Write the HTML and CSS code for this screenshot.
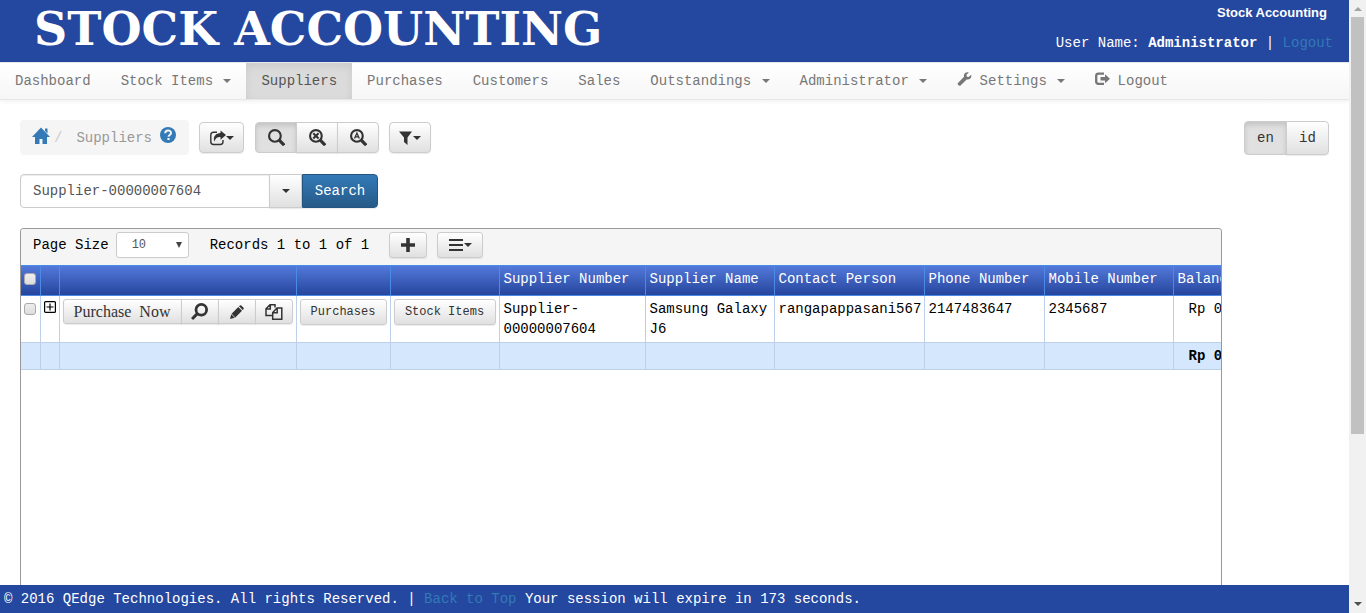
FILE: index.html
```html
<!DOCTYPE html>
<html lang="en">
<head>
<meta charset="utf-8">
<title>Stock Accounting - Suppliers</title>
<link rel="stylesheet" href="styles.css">
</head>
<body>
<svg class="defs" aria-hidden="true">
  <symbol id="i-home" viewBox="0 0 18 18"><path d="M9 0.5 18 10h-3v7h-4.500v-5h-3v5H3v-7H0L9 .5zM13 1.500h2.500v5L13 4z"/></symbol>
  <symbol id="i-help" viewBox="0 0 16 16"><circle cx="8" cy="8" r="8"/><path d="M5.200 6.200C5.200 2.500 11 2.600 11 5.900 11 8 8.600 7.900 8.500 9.800" fill="none" stroke="#f5f5f5" stroke-width="2"/><path d="M7.400 11h2.200v2H7.400z" fill="#f5f5f5"/></symbol>
  <symbol id="i-share" viewBox="0 0 16 15"><path d="M7 1.800H3.500Q.8 1.800.8 4.500v6.800Q.8 14 3.500 14h6.800q2.700 0 2.700-2.700V9.500" fill="none" stroke="currentColor" stroke-width="1.400"/><path d="M10.500 0 16 4.500l-5.500 4.800V6.500C7.500 6.300 5.500 7.500 4.300 11 2.800 6 6 2.500 10.500 2.500z"/></symbol>
  <symbol id="i-search" viewBox="0 0 16 16"><circle cx="6.500" cy="6.500" r="5.500" fill="none" stroke="currentColor" stroke-width="2"/><path d="m10.300 10.300 4.900 4.900" stroke="currentColor" stroke-width="3"/></symbol>
  <symbol id="i-lens" viewBox="0 0 16 16"><circle cx="9.700" cy="6.300" r="5" fill="none" stroke="currentColor" stroke-width="2.600"/><path d="M6 10 1 15" stroke="currentColor" stroke-width="2.800"/></symbol>
  <symbol id="i-x" viewBox="0 0 16 16"><path d="m4 4 5 5M9 4 4 9" stroke="currentColor" stroke-width="2"/></symbol>
  <symbol id="i-a" viewBox="0 0 16 16"><path d="m4.200 9 2.300-5.200L8.800 9M5 7.500h3" stroke="currentColor" stroke-width="1.200" fill="none"/></symbol>
  <symbol id="i-filter" viewBox="0 0 14 14"><path d="M0 0.500h13L8.500 6.500V14L5 11V6.500z"/></symbol>
  <symbol id="i-wrench" viewBox="0 0 14 14"><path d="M13.600 2.700 11.200 5 9.300 4.700 9 2.800 11.300.4C8.500-.6 5.700 1.500 6.500 4.700L.5 10.900c-1.200 1.400 1.100 3.700 2.500 2.500l6.200-6c3 .8 5.300-1.900 4.400-4.700z"/></symbol>
  <symbol id="i-logout" viewBox="0 0 15 14"><path d="M9 1.600H3.500Q1.200 1.600 1.200 3.900v5.700q0 2.300 2.300 2.300H9" fill="none" stroke="currentColor" stroke-width="2.300"/><path d="M10 2.300 15 6.700 10 11.200V8.500H5.500V5H10z"/></symbol>
  <symbol id="i-plus" viewBox="0 0 14 14"><path d="M5.200 0h3.600v5.200H14v3.600H8.800V14H5.200V8.800H0V5.200h5.200z"/></symbol>
  <symbol id="i-menu" viewBox="0 0 14 12"><path d="M0 0h14v2H0zM0 5h14v2H0zM0 10h14v2H0z"/></symbol>
  <symbol id="i-pencil" viewBox="0 0 14 14"><path d="m0 14 1.200-4.800 3.600 3.600zM1.600 8.700 8.300 2 12 5.700 5.300 12.400zM9 1.300l.8-.8q.7-.7 1.500 0l2.200 2.200q.7.800 0 1.500l-.8.800z"/></symbol>
  <symbol id="i-copy" viewBox="0 0 18 16"><path d="M10 3.500V.8H5L1 4.800V11.500h6M5.300.8V5H1M12 4h4.800v11.200H7.700V8.500zM12.200 4v4.700H7.700" fill="none" stroke="currentColor" stroke-width="1.500"/></symbol>
  <symbol id="i-expand" viewBox="0 0 12 12"><rect x=".6" y=".6" width="10.800" height="10.800" rx="1" fill="#fff" stroke="#000" stroke-width="1.200"/><path d="M2.500 6h7M6 2.500v7" stroke="#000" stroke-width="1.200"/></symbol>
</svg>
<div class="page">
  <header class="banner">
    <h1 class="logo">STOCK ACCOUNTING</h1>
    <div class="account">
      <strong class="company">Stock Accounting</strong>
      <div>User Name: <strong>Administrator</strong> | <a href="#">Logout</a></div>
    </div>
  </header>
  <nav class="nav">
    <a href="#">Dashboard</a>
    <a href="#">Stock Items <i class="caret"></i></a>
    <a href="#" class="active">Suppliers</a>
    <a href="#">Purchases</a>
    <a href="#">Customers</a>
    <a href="#">Sales</a>
    <a href="#">Outstandings <i class="caret"></i></a>
    <a href="#">Administrator <i class="caret"></i></a>
    <a href="#"><svg class="nav-icon"><use href="#i-wrench"/></svg> Settings <i class="caret"></i></a>
    <a href="#"><svg class="nav-icon"><use href="#i-logout"/></svg> Logout</a>
  </nav>
  <main class="content">
    <div class="tools">
      <div class="crumbs">
        <a href="#" aria-label="Home"><svg class="icon-home"><use href="#i-home"/></svg></a>
        <span class="slash">/</span>
        <span class="current">Suppliers</span>
        <a href="#" aria-label="Help"><svg class="icon-help"><use href="#i-help"/></svg></a>
      </div>
      <button class="btn export" aria-label="Export"><svg class="icon-help"><use href="#i-share"/></svg><i class="caret"></i></button>
      <div class="group modes">
        <button class="btn on" aria-label="Search"><svg class="icon"><use href="#i-search"/></svg></button>
        <button class="btn" aria-label="Clear search"><svg class="icon"><use href="#i-search"/><use href="#i-x"/></svg></button>
        <button class="btn" aria-label="Show all"><svg class="icon"><use href="#i-search"/><use href="#i-a"/></svg></button>
      </div>
      <button class="btn filter" aria-label="Filter"><svg class="icon-sm"><use href="#i-filter"/></svg><i class="caret"></i></button>
      <div class="group lang">
        <button class="btn on">en</button>
        <button class="btn">id</button>
      </div>
    </div>
    <form class="search">
      <input type="text" aria-label="Search text" value="Supplier-00000007604">
      <button type="button" class="btn drop" aria-label="Search options"><i class="caret"></i></button>
      <button type="button" class="btn primary">Search</button>
    </form>
    <section class="panel">
      <div class="panel-bar">
        <label for="size">Page Size</label>
        <div class="select"><select id="size"><option>10</option></select></div>
        <span class="records">Records 1 to 1 of 1</span>
        <button class="btn add" aria-label="Add"><svg class="icon-sm"><use href="#i-plus"/></svg></button>
        <button class="btn more" aria-label="More"><svg class="icon-menu"><use href="#i-menu"/></svg><i class="caret"></i></button>
      </div>
      <table>
        <colgroup><col class="c-check"><col class="c-expand"><col class="c-actions"><col class="c-purch"><col class="c-stock"><col class="c-number"><col class="c-name"><col class="c-contact"><col class="c-phone"><col class="c-mobile"><col class="c-balance"></colgroup>
        <thead>
          <tr><th><input type="checkbox" aria-label="Select all"></th><th></th><th></th><th></th><th></th><th>Supplier Number</th><th>Supplier Name</th><th>Contact Person</th><th>Phone Number</th><th>Mobile Number</th><th>Balance</th></tr>
        </thead>
        <tbody>
          <tr>
            <td><input type="checkbox" aria-label="Select row"></td>
            <td><svg class="expand"><use href="#i-expand"/></svg></td>
            <td><div class="group row-actions"><button class="btn buy">Purchase&nbsp; Now</button><button class="btn" aria-label="View"><svg class="icon"><use href="#i-lens"/></svg></button><button class="btn" aria-label="Edit"><svg class="icon-sm"><use href="#i-pencil"/></svg></button><button class="btn" aria-label="Copy"><svg class="icon-copy"><use href="#i-copy"/></svg></button></div></td>
            <td><button class="btn small">Purchases</button></td>
            <td><button class="btn small">Stock Items</button></td>
            <td class="text">Supplier-<br>00000007604</td>
            <td class="text">Samsung Galaxy J6</td>
            <td class="text">rangapappasani567</td>
            <td class="text">2147483647</td>
            <td class="text">2345687</td>
            <td class="money">Rp 0</td>
          </tr>
        </tbody>
        <tfoot>
          <tr><td></td><td></td><td></td><td></td><td></td><td></td><td></td><td></td><td></td><td></td><td class="money">Rp 0</td></tr>
        </tfoot>
      </table>
    </section>
  </main>
  <footer class="footer">© 2016 QEdge Technologies. All rights Reserved. | <a href="#">Back to Top</a> Your session will expire in 173 seconds.</footer>
</div>
<div class="scrollbar" aria-hidden="true"><i class="up"></i><div class="track"><div class="thumb"></div></div><i class="down"></i></div>
</body>
</html>
```
FILE: styles.css
```css
* { box-sizing: border-box; }
body {
  margin: 0;
  display: flex;
  height: 100vh;
  overflow: hidden;
  background: #fff;
  color: #000;
  font: 14px/20px "Liberation Mono", monospace;
}
a { color: #337ab7; text-decoration: none; }
svg { fill: currentColor; flex: none; }
.defs { display: none; }
.page { flex: 1; min-width: 0; display: flex; flex-direction: column; }

.banner {
  display: flex;
  justify-content: space-between;
  height: 62px;
  flex: none;
  padding: 0 16px 0 34px;
  background: #2447a0;
  color: #fff;
}
.logo { margin: 0; font: bold 46px/58px "DejaVu Serif", serif; white-space: nowrap; }
.account { display: flex; flex-direction: column; gap: 10px; padding-top: 3px; text-align: right; }
.company { padding-right: 6px; font: bold 13px/20px "Liberation Sans", sans-serif; }

.nav {
  display: flex;
  flex: none;
  height: 38px;
  border: solid #e7e7e7;
  border-width: 1px 0;
  background: linear-gradient(#fff, #f6f6f6);
  box-shadow: 0 1px 5px rgba(0, 0, 0, .08);
}
.nav a { padding: 8px 15px; color: #777; white-space: pre; }
.nav .active { background: #dbdbdb; color: #555; box-shadow: inset 0 3px 9px rgba(0, 0, 0, .08); }
.nav-icon { width: 15px; height: 14px; margin-right: -1px; vertical-align: -1px; }
.caret {
  display: inline-block;
  margin-left: 2px;
  border: solid transparent;
  border-width: 4px 4px 0;
  border-top-color: currentColor;
  vertical-align: middle;
}

.content { flex: 1; min-height: 0; display: flex; flex-direction: column; gap: 19px; padding: 20px 20px 0; overflow: hidden; }
.tools { display: flex; align-items: center; height: 35px; flex: none; }
.crumbs { display: flex; width: 169px; height: 35px; padding: 7px 12px; border-radius: 4px; background: #f5f5f5; }
.icon-home { width: 18px; height: 18px; }
.slash { margin: 1px 0 0 4px; color: #ccc; }
.current { margin: 1px 8px 0 14px; color: #999; }

.icon { width: 17px; height: 17px; }
.icon-help { width: 16px; height: 16px; }
.icon-sm { width: 14px; height: 14px; }
.icon-menu { width: 14px; height: 12px; }
.icon-copy { width: 18px; height: 16px; }
.btn {
  display: flex;
  align-items: center;
  justify-content: center;
  height: 31px;
  padding: 0;
  border: 1px solid #ccc;
  border-radius: 4px;
  background: linear-gradient(#fff, #e0e0e0);
  box-shadow: 0 1px 1px rgba(0, 0, 0, .08);
  color: #333;
  font: inherit;
}
.btn .caret { margin-left: 0; }
.btn.on { background: #e0e0e0; box-shadow: inset 0 3px 5px rgba(0, 0, 0, .125); }
.group { display: flex; }
.group .btn:not(:first-child) { margin-left: -1px; border-top-left-radius: 0; border-bottom-left-radius: 0; }
.group .btn:not(:last-child) { border-top-right-radius: 0; border-bottom-right-radius: 0; }
.export { width: 45px; margin: 0 11px 0 10px; }
.modes .btn { width: 42px; }
.filter { width: 42px; margin-left: 10px; }
.lang { margin-left: auto; }
.lang .btn { width: 43px; height: 34px; }

.search { display: flex; flex: none; width: 358px; height: 34px; }
.search input {
  flex: 1;
  min-width: 0;
  padding: 0 12px;
  border: 1px solid #ccc;
  border-radius: 4px 0 0 4px;
  box-shadow: inset 0 1px 1px rgba(0, 0, 0, .075);
  color: #555;
  font: inherit;
}
.search .btn { height: 34px; }
.search .drop { width: 33px; margin-left: -1px; border-radius: 0; }
.search .primary { width: 76px; border-color: #245580; border-radius: 0 4px 4px 0; background: linear-gradient(#337ab7, #265a88); color: #fff; }

.panel { flex: 1; min-height: 0; margin: 1px 107px 0 0; border: 1px solid #999; border-bottom: 0; border-radius: 4px 4px 0 0; overflow: hidden; }
.panel-bar { display: flex; align-items: center; height: 36px; padding: 0 12px 4px; background: #f5f5f5; white-space: nowrap; }
.select { position: relative; margin: 0 21px 0 7px; }
.select::after {
  content: "";
  position: absolute;
  right: 7px;
  top: 10px;
  border: solid transparent;
  border-width: 6px 3px 0;
  border-top-color: #444;
  pointer-events: none;
}
.select select {
  display: block;
  width: 73px;
  height: 26px;
  padding: 0 15px;
  appearance: none;
  border: 1px solid #ccc;
  border-radius: 3px;
  background: #fff;
  color: #555;
  font: 12px/18px "Liberation Mono", monospace;
}
.panel-bar .btn { height: 26px; border-radius: 3px; }
.add { width: 38px; margin: 0 10px 0 20px; }
.more { width: 46px; }
.more .caret { margin-left: 1px; }

table { width: 1246px; table-layout: fixed; border-collapse: collapse; }
.c-check { width: 19px; }
.c-expand { width: 19px; }
.c-actions { width: 237px; }
.c-purch { width: 94px; }
.c-stock { width: 109px; }
.c-number { width: 146px; }
.c-name { width: 129px; }
.c-contact { width: 150px; }
.c-phone { width: 120px; }
.c-mobile { width: 129px; }
.c-balance { width: 94px; }
th, td { padding: 3px; border: 1px solid #bdd0ea; text-align: left; vertical-align: top; }
th:first-child, td:first-child { border-left: 0; }
th { height: 30px; border-color: #4a8be8; color: #fff; font-weight: normal; white-space: nowrap; }
th:not(:first-child), .text { padding: 3px 0 3px 4px; }
thead tr { background: linear-gradient(#5379da, #24439b); }
tbody td { height: 47px; }
tfoot td { height: 27px; background: #d5e7fd; font-weight: bold; }
.money { padding-left: 15px; }
td .btn { height: 25px; border-radius: 3px; }
table input {
  display: block;
  width: 12px;
  height: 12px;
  margin: 4px 0 0 0;
  appearance: none;
  border: 1px solid #aaa;
  border-radius: 3px;
  background: linear-gradient(#eee, #ddd);
}
.expand { display: block; width: 12px; height: 12px; margin: 2px 0 0; }
.row-actions .btn { width: 38px; }
.row-actions .buy { width: 119px; font: 16px/20px "Liberation Serif", serif; }
td .small { width: 100%; height: 26px; font-size: 12px; }

.footer { flex: none; height: 28px; padding: 4px; background: #2447a0; color: #fff; white-space: nowrap; }

.scrollbar { display: flex; flex-direction: column; align-items: center; width: 17px; background: #f1f1f1; }
.track { flex: 1; width: 13px; }
.thumb { height: 72%; background: #c1c1c1; }
.up, .down { border: solid transparent; }
.up { margin: 7px 0 6px; border-width: 0 4px 4px; border-bottom-color: #a3a3a3; }
.down { margin: 6px 0 7px; border-width: 4px 4px 0; border-top-color: #505050; }
```
